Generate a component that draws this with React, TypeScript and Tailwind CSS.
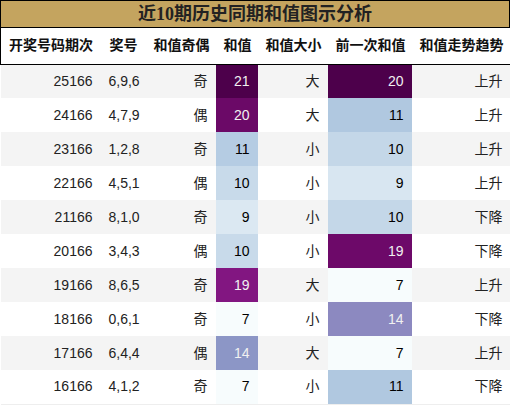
import React from 'react';

type Row = {
    period: string;
    nums: string;
    parity: string;
    sum: number;
    size: string;
    prev: number;
    trend: string;
};

const rows: Row[] = [
    { period: '25166', nums: '6,9,6', parity: '奇', sum: 21, size: '大', prev: 20, trend: '上升' },
    { period: '24166', nums: '4,7,9', parity: '偶', sum: 20, size: '大', prev: 11, trend: '上升' },
    { period: '23166', nums: '1,2,8', parity: '奇', sum: 11, size: '小', prev: 10, trend: '上升' },
    { period: '22166', nums: '4,5,1', parity: '偶', sum: 10, size: '小', prev: 9, trend: '上升' },
    { period: '21166', nums: '8,1,0', parity: '奇', sum: 9, size: '小', prev: 10, trend: '下降' },
    { period: '20166', nums: '3,4,3', parity: '偶', sum: 10, size: '小', prev: 19, trend: '下降' },
    { period: '19166', nums: '8,6,5', parity: '奇', sum: 19, size: '大', prev: 7, trend: '上升' },
    { period: '18166', nums: '0,6,1', parity: '奇', sum: 7, size: '小', prev: 14, trend: '下降' },
    { period: '17166', nums: '6,4,4', parity: '偶', sum: 14, size: '大', prev: 7, trend: '上升' },
    { period: '16166', nums: '4,1,2', parity: '奇', sum: 7, size: '小', prev: 11, trend: '下降' },
];

// BuPu gradient, sum column (range 7..21)
const sumColors: Record<number, string> = {
    21: 'bg-[#4d004b] text-[#f1f1f1]',
    20: 'bg-[#6b0967] text-[#f1f1f1]',
    19: 'bg-[#821681] text-[#f1f1f1]',
    14: 'bg-[#8c96c6] text-[#f1f1f1]',
    11: 'bg-[#b5cce3] text-[#000]',
    10: 'bg-[#c8daea] text-[#000]',
    9: 'bg-[#dbe8f2] text-[#000]',
    7: 'bg-[#f7fcfd] text-[#000]',
};

// previous sum column (range 7..20)
const prevColors: Record<number, string> = {
    20: 'bg-[#4d004b] text-[#f1f1f1]',
    19: 'bg-[#6d0969] text-[#f1f1f1]',
    14: 'bg-[#8c89c0] text-[#f1f1f1]',
    11: 'bg-[#b0c8e0] text-[#000]',
    10: 'bg-[#c4d7e8] text-[#000]',
    9: 'bg-[#d8e6f1] text-[#000]',
    7: 'bg-[#f7fcfd] text-[#000]',
};

const headers = ['开奖号码期次', '奖号', '和值奇偶', '和值', '和值大小', '前一次和值', '和值走势趋势'];
const widths = ['w-[100px]', 'w-[45px]', 'w-[70px]', 'w-[42px]', 'w-[70px]', 'w-[84px]', 'w-[99px]'];

export default function App() {
    return (
        <div className="w-[510px] h-[405px] bg-white overflow-hidden font-['Liberation_Sans','Noto_Sans_CJK_SC',sans-serif] text-[#222]">
            <div className="h-[28px] border border-black bg-[#c4a45f] flex items-center justify-center">
                <h1 className="text-[18px] font-bold text-[#222] leading-none font-['Liberation_Serif','Noto_Sans_CJK_SC',serif]">
                    近10期历史同期和值图示分析
                </h1>
            </div>
            <table className="w-[510px] border-collapse table-fixed text-[14px]">
                <thead>
                    <tr className="h-[36px] border-b border-black">
                        {headers.map((h, i) => (
                            <th
                                key={h}
                                className={`${widths[i]} px-2 text-right font-bold text-[#111] whitespace-nowrap ${i === 0 ? 'border-l border-black' : ''} ${i === headers.length - 1 ? 'border-r border-black' : ''}`}
                            >
                                {h}
                            </th>
                        ))}
                    </tr>
                </thead>
                <tbody>
                    {rows.map((r, i) => (
                        <tr key={r.period} className={`h-[34px] ${i % 2 === 0 ? 'bg-[#f4f4f4]' : 'bg-white'} ${i === rows.length - 1 ? 'border-b border-[#eeeeee]' : ''}`}>
                            <td className="px-2 text-right">{r.period}</td>
                            <td className="px-2 text-right">{r.nums}</td>
                            <td className="px-2 text-right">{r.parity}</td>
                            <td className={`px-2 text-right ${sumColors[r.sum]}`}>{r.sum}</td>
                            <td className="px-2 text-right">{r.size}</td>
                            <td className={`px-2 text-right ${prevColors[r.prev]}`}>{r.prev}</td>
                            <td className="px-2 text-right">{r.trend}</td>
                        </tr>
                    ))}
                </tbody>
            </table>
        </div>
    );
}
